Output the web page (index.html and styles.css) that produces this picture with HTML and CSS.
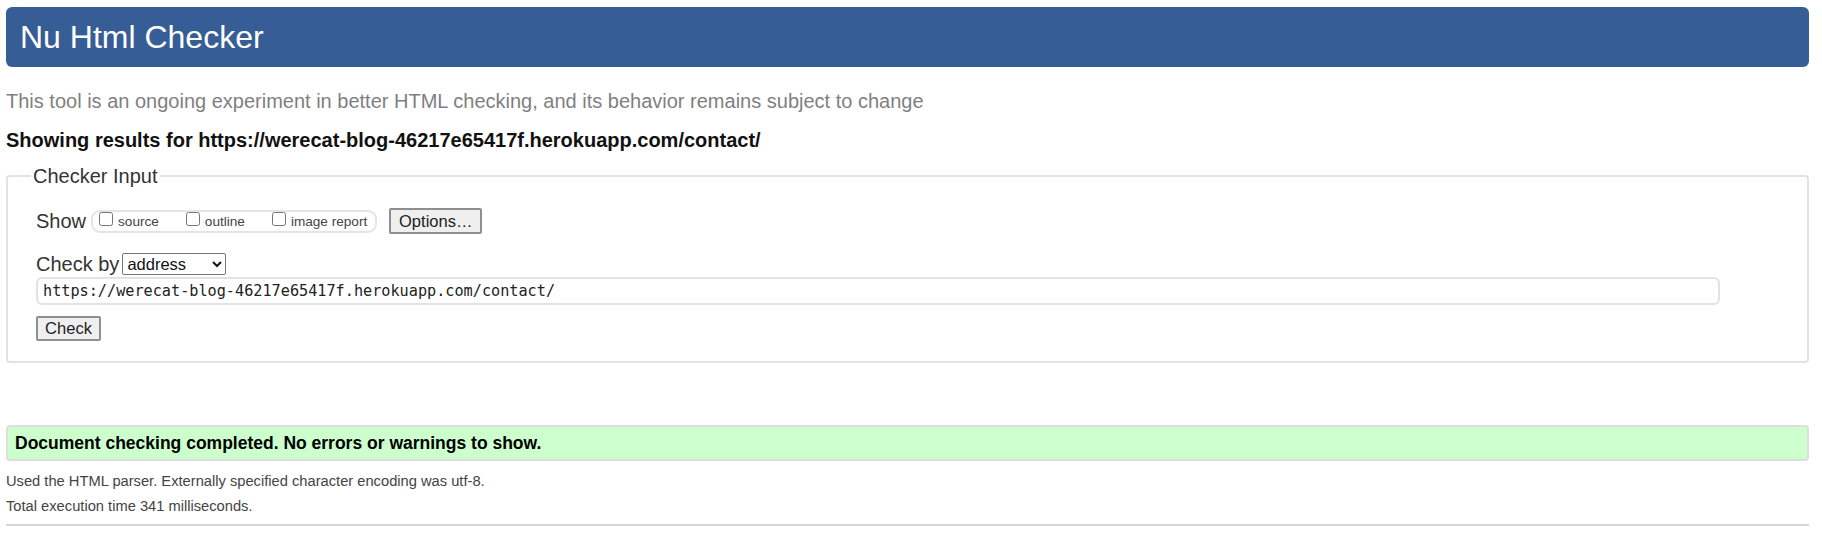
FILE: index.html
```html
<!DOCTYPE html>
<html lang="en">
<head>
<meta charset="utf-8">
<title>Nu Html Checker</title>
<link rel="stylesheet" href="styles.css">
</head>
<body>
<h1 class="banner">Nu Html Checker</h1>
<p class="intro">This tool is an ongoing experiment in better HTML checking, and its behavior remains subject to change</p>
<p class="showing">Showing results for https://werecat-blog-46217e65417f.herokuapp.com/contact/</p>
<fieldset class="input-box">
  <legend class="input-legend">Checker Input</legend>
  <div class="row show-row">
    <span class="row-label">Show</span>
    <span class="show-group">
      <label class="opt"><input type="checkbox" class="cb"><span>source</span></label>
      <label class="opt"><input type="checkbox" class="cb"><span>outline</span></label>
      <label class="opt"><input type="checkbox" class="cb"><span>image report</span></label>
    </span>
    <button class="btn btn-options" type="button">Options…</button>
  </div>
  <div class="row check-row">
    <span class="row-label">Check by</span>
    <select class="sel">
      <option>address</option>
    </select>
  </div>
  <div class="url-box">https://werecat-blog-46217e65417f.herokuapp.com/contact/</div>
  <button class="btn btn-check" type="button">Check</button>
</fieldset>
<div class="success">Document checking completed. No errors or warnings to show.</div>
<p class="details">Used the HTML parser. Externally specified character encoding was utf-8.</p>
<p class="details">Total execution time 341 milliseconds.</p>
<hr class="rule">
</body>
</html>
```
FILE: styles.css
```css
html, body {
  margin: 0;
  background: #fff;
}
body {
  padding: 7px 13px 0 6px;
  font-family: "Liberation Sans", Arial, sans-serif;
  color: #222;
}
.banner {
  margin: 0;
  height: 60px;
  line-height: 60px;
  padding-left: 14px;
  background: #365d95;
  color: #fff;
  font-size: 32px;
  font-weight: normal;
  border-radius: 6px;
}
.intro {
  margin: 22px 0 0;
  font-size: 20px;
  line-height: 24px;
  color: #7f7f7f;
}
.showing {
  margin: 15px 0 0;
  font-size: 20px;
  line-height: 24px;
  font-weight: bold;
  color: #111;
}
.input-box {
  margin: 12px 0 0;
  padding: 0 0 20px 28px;
  border: 2px solid #e2e2e2;
  border-radius: 4px;
}
.input-legend {
  margin-left: -5px;
  padding: 0 2px;
  font-size: 20px;
  line-height: 24px;
  color: #333;
}
.row {
  display: flex;
  align-items: center;
}
.row-label {
  font-size: 20px;
  color: #333;
}
.show-row {
  margin-top: 20px;
  height: 26px;
}
.show-group {
  display: flex;
  align-items: center;
  margin-left: 5px;
  height: 19px;
  padding: 0 8px 0 6px;
  border: 2px solid #e4e4e4;
  border-radius: 9px;
}
.opt {
  display: flex;
  align-items: center;
  font-size: 13.6px;
  color: #444;
  margin-right: 27px;
}
.opt:last-child {
  margin-right: 0;
}
.cb {
  margin: 0 5px 5px 0;
  width: 14px;
  height: 14px;
}
.btn {
  font-family: "Liberation Sans", Arial, sans-serif;
  font-size: 16.5px;
  color: #222;
  background: #efefef;
  border: 2px solid #8f8f8f;
  border-radius: 2px;
  padding: 0;
}
.btn-options {
  margin-left: 12px;
  width: 93px;
  height: 26px;
}
.check-row {
  margin-top: 19px;
  height: 22px;
}
.sel {
  margin-left: 3px;
  width: 104px;
  height: 22px;
  font-family: "Liberation Sans", Arial, sans-serif;
  font-size: 16.5px;
  color: #111;
  background: #fff;
  border: 1px solid #767676;
  border-radius: 2px;
}
.url-box {
  margin-top: 2px;
  width: 1684px;
  box-sizing: border-box;
  height: 28px;
  line-height: 24px;
  padding-left: 5px;
  border: 2px solid #e2e2e2;
  border-radius: 6px;
  font-family: "DejaVu Sans Mono", monospace;
  font-size: 15.2px;
  color: #222;
}
.btn-check {
  display: block;
  margin-top: 11px;
  width: 65px;
  height: 25px;
}
.success {
  margin-top: 62px;
  height: 36px;
  box-sizing: border-box;
  padding-left: 7px;
  line-height: 32px;
  background: #ccffcc;
  border: 2px solid #dedede;
  border-radius: 4px;
  font-size: 17.5px;
  font-weight: bold;
  color: #000;
}
.details {
  margin: 0;
  font-size: 14.7px;
  line-height: 25px;
  color: #444;
}
.success + .details {
  margin-top: 8px;
}
.rule {
  margin: 5px 0 0;
  border: 0;
  border-top: 2px solid #d6d6d6;
}
```
